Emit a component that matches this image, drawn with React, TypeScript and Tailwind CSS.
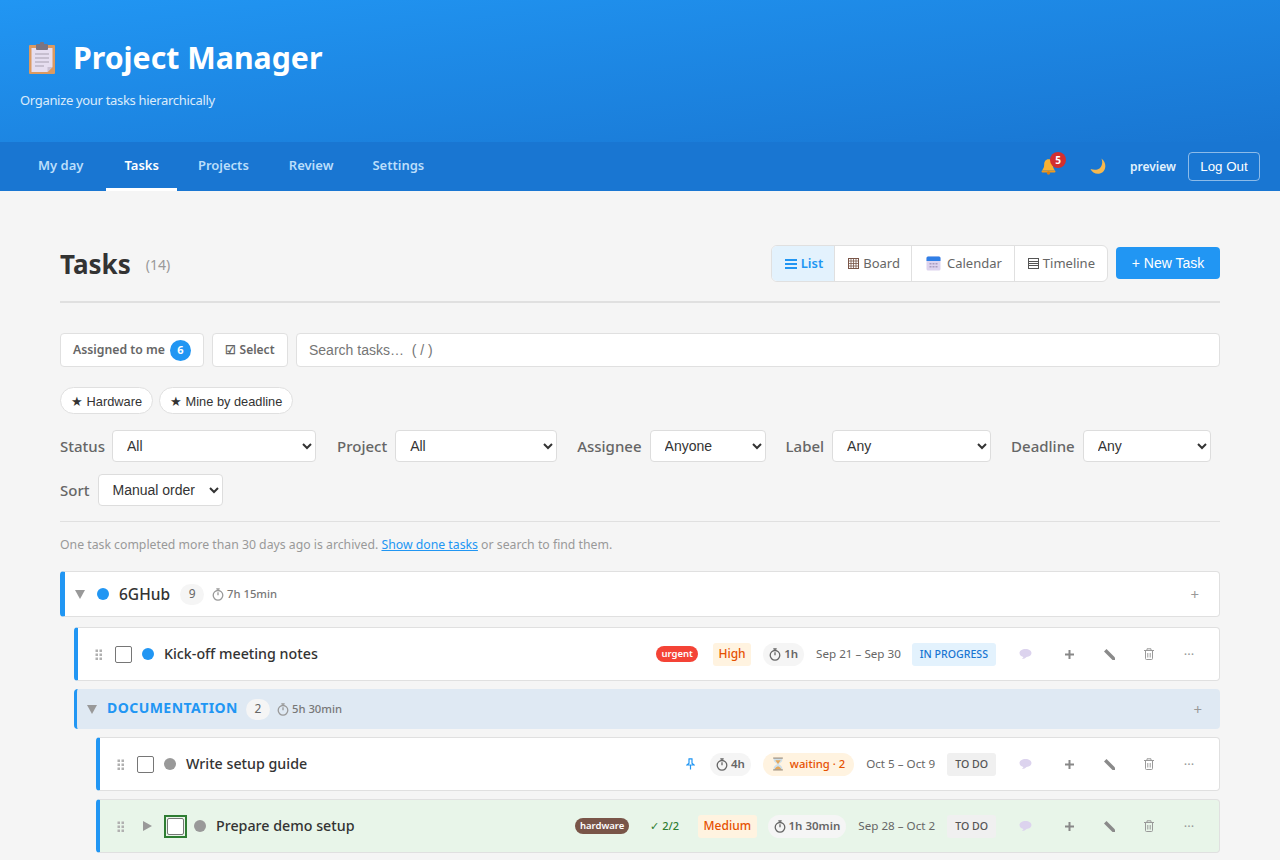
import React from "react";

const ui = "font-['Noto_Sans','Open_Sans',sans-serif]";
const arial = "font-['Liberation_Sans',Arial,sans-serif]";

function Clipboard() {
  return (
    <svg width="28" height="32" viewBox="0 0 28 32" className="shrink-0">
      <rect x="1" y="3" width="26" height="29" rx="1" fill="#dc9a60" />
      <path d="M3.500 6h21v19l-5 5h-16z" fill="#e6def0" />
      <path d="M19.500 30v-5h5z" fill="#c9bfd2" />
      <rect x="8" y="2" width="12" height="6" rx="1" fill="#7b7480" />
      <rect x="12" y="0" width="4" height="4" rx="1" fill="#7b7480" />
      <path d="M7 12h14M7 16h14M7 20h14M7 24h9" stroke="#a79fb0" strokeWidth="1.200" />
    </svg>
  );
}
function Bell() {
  return (
    <svg width="17" height="17" viewBox="0 0 17 17" className="block">
      <path d="M8.500 1.200c-3 0-4.300 2.500-4.300 5.300 0 3-1 4.500-2.200 6h13c-1.200-1.500-2.200-3-2.200-6 0-2.800-1.300-5.300-4.300-5.300z" fill="#f9b233" />
      <rect x="1.500" y="12.500" width="14" height="2" rx="1" fill="#ee9a1f" />
      <circle cx="8.500" cy="15" r="1.700" fill="#d97f12" />
    </svg>
  );
}
function Moon() {
  return (
    <svg width="17" height="17" viewBox="0 0 17 17" className="block">
      <path d="M11.500.5c1.500 4 .5 8-2 10-2.500 1.700-6 1.500-9 .5 1.500 3.500 5.500 5.500 9.500 4.500 6-1.500 7.500-10.500 1.500-15z" fill="#f6b84e" />
    </svg>
  );
}
function Cal() {
  return (
    <svg width="15" height="15" viewBox="0 0 14 15" className="block shrink-0">
      <rect x="0" y="0.500" width="14" height="14" rx="1.500" fill="#ddd3ee" />
      <path d="M0 2a1.500 1.500 0 0 1 1.500-1.500h11A1.500 1.500 0 0 1 14 2v3H0z" fill="#2f7fe6" />
      <path d="M3 7h2v1.500H3zM6 7h2v1.500H6zM9 7h2v1.500H9zM3 10h2v1.500H3zM6 10h2v1.500H6zM9 10h2v1.500H9z" fill="#a99cc0" />
    </svg>
  );
}
function Grid() {
  return (
    <svg width="11" height="11" viewBox="0 0 11 11" fill="none" stroke="#795548" strokeWidth="1" className="block shrink-0">
      <rect x="0.500" y="0.500" width="10" height="10" />
      <path d="M0 3h11M0 5.500h11M0 8h11M3 0v11M5.500 0v11M8 0v11" strokeWidth="0.800" />
    </svg>
  );
}
function Lines() {
  return (
    <svg width="11" height="11" viewBox="0 0 11 11" fill="none" stroke="#555" strokeWidth="1" className="block shrink-0">
      <rect x="0.500" y="0.500" width="10" height="10" />
      <path d="M0 3.500h11M0 5.500h11M0 7.500h11" />
    </svg>
  );
}
function Drag() {
  return (
    <svg width="8" height="11" viewBox="0 0 8 11" fill="#b0b0b0" className="block shrink-0">
      {[0.500, 4.500].map((x) => [0.500, 4.500, 8.500].map((y) => <rect key={`${x}${y}`} x={x} y={y} width="2.500" height="2.500" />))}
    </svg>
  );
}
function Bubble() {
  return (
    <svg width="13" height="12" viewBox="0 0 13 12" className="block">
      <path d="M6.500 1C3 1 .5 2.700.5 5s2 3.800 4 4L3 11c2 0 3.500-1 4.500-2 3-.2 5-1.800 5-4S10 1 6.500 1z" fill="#dcd3ee" />
    </svg>
  );
}
function Pencil() {
  return (
    <svg width="11" height="11" viewBox="0 0 11 11" className="block">
      <path d="M0 2.500 2.500 0 11 8.500V11H8.500z" fill="#8a8a8a" />
    </svg>
  );
}
function Trash() {
  return (
    <svg width="10" height="12" viewBox="0 0 10 12" fill="none" stroke="#999" strokeWidth="1" className="block">
      <path d="M1.500 3v7.500a1 1 0 0 0 1 1h5a1 1 0 0 0 1-1V3M0 2.500h10M3 2.500V.8h4v1.700M3.800 5v4.500M6.200 5v4.500" />
    </svg>
  );
}
function Plus() {
  return (
    <svg width="9" height="9" viewBox="0 0 9 9" className="block"><path d="M3.500 0h2v3.500H9v2H5.500V9h-2V5.500H0v-2h3.500z" fill="#888" /></svg>
  );
}
function Pin() {
  return (
    <svg width="9" height="12" viewBox="0 0 9 12" fill="none" stroke="#2196f3" strokeWidth="1.200" className="block">
      <path d="M2.500 .8h4M3 .8v4.500L1 7h7L6 5.300V.8M4.500 7v4.500" />
    </svg>
  );
}
function Hourglass() {
  return (
    <svg width="12" height="14" viewBox="0 0 10 13" className="block shrink-0">
      <path d="M1 1h8v1.500C9 5 6 5.500 6 6.500S9 8 9 10.500V12H1v-1.500C1 8 4 7.500 4 6.500S1 5 1 2.500z" fill="#cfe0ea" />
      <path d="M2.500 3h5L5 6.500zM1.800 11.500C2.500 9.500 4 9 5 8.500c1 .5 2.500 1 3.200 3z" fill="#e5a75a" />
      <rect x="0.500" y="0.500" width="9" height="1" fill="#9a8a78" />
      <rect x="0.500" y="11.500" width="9" height="1" fill="#9a8a78" />
    </svg>
  );
}
function Timer({ color = "#666" }: { color?: string }) {
  return (
    <svg width="12" height="13" viewBox="0 0 12 13" fill="none" stroke={color} strokeWidth="1.300" className="block shrink-0">
      <circle cx="6" cy="7.300" r="4.800" />
      <path d="M4.300 .8h3.400M6 1v1.500M6 7.300V4.300" />
    </svg>
  );
}
function Tri({ dir }: { dir: "down" | "right" }) {
  return (
    <svg width="10" height="10" viewBox="0 0 10 10" fill="#999" className="block shrink-0">
      {dir === "down" ? <path d="M0 1h10L5 10z" /> : <path d="M1 0l9 5-9 5z" />}
    </svg>
  );
}

function Actions() {
  return (
    <div className="flex items-center shrink-0 ml-[9px] mr-[10px]">
      <span className="w-10 mr-1 flex justify-center"><Bubble /></span>
      <span className="w-10 flex justify-center"><Plus /></span>
      <span className="w-10 flex justify-center"><Pencil /></span>
      <span className="w-10 flex justify-center"><Trash /></span>
      <span className="w-10 flex justify-center text-[13px] leading-none text-[#999]">···</span>
    </div>
  );
}
function Est({ children }: { children: React.ReactNode }) {
  return (
    <span className="flex items-center gap-[3px] h-[23px] px-[6px] rounded-full bg-[#f5f5f5] text-[#666] text-[11.5px] font-semibold whitespace-nowrap">
      <Timer />{children}
    </span>
  );
}
function Dates({ children }: { children: React.ReactNode }) {
  return <span className="block text-[11.65px] text-[#666] whitespace-nowrap">{children}</span>;
}
function Status({ children, blue }: { children: React.ReactNode; blue?: boolean }) {
  return (
    <span className={`flex items-center h-[23px] pt-px px-2 rounded-[3px] text-[10.6px] font-medium whitespace-nowrap ${blue ? "bg-[#e3f2fd] text-[#1976d2]" : "bg-[#f0f0f0] text-[#555]"}`}>
      {children}
    </span>
  );
}
function Dot({ c, className }: { c: string; className: string }) {
  return <span className={`block w-3 h-3 rounded-full shrink-0 ${className}`} style={{ background: c }} />;
}
function Box({ className = "" }: { className?: string }) {
  return <span className={`block w-[17px] h-[17px] rounded-[2px] border border-[#767676] bg-white shrink-0 ${className}`} />;
}

function Select({ w, children }: { w: string; children: string }) {
  return (
    <select className={`${w} h-8 ${arial} text-[14px] text-[#333] bg-white border border-[#ddd] rounded-[4px] pl-[10px]`} defaultValue={children}>
      <option>{children}</option>
    </select>
  );
}
function Filter({ label, w, value, gap = "gap-2" }: { label: string; w: string; value: string; gap?: string }) {
  return (
    <label className={`flex items-center ${gap}`}>
      <span className="text-[15px] font-medium text-[#666]">{label}</span>
      <Select w={w}>{value}</Select>
    </label>
  );
}

const tabs = [
  { t: "My day", c: "mr-[5px] text-[#bbdefb] border-transparent" },
  { t: "Tasks", c: "mr-[3px] text-white border-white" },
  { t: "Projects", c: "mr-[4px] text-[#bbdefb] border-transparent" },
  { t: "Review", c: "mr-[3px] text-[#bbdefb] border-transparent" },
  { t: "Settings", c: "text-[#bbdefb] border-transparent" },
];

export default function App() {
  return (
    <div className={`h-[860px] overflow-hidden bg-[#f5f5f5] ${ui} text-[#333]`}>
      <header className="h-[142px] bg-gradient-to-br from-[#2196f3] to-[#1976d2] pl-5 pt-[36px] text-white">
        <h1 className="flex items-center gap-[17px] pl-2 h-[44px] text-[30.25px] font-bold leading-none">
          <Clipboard />Project Manager
        </h1>
        <p className="mt-[11px] text-[13px] tracking-[-0.32px] leading-[18px] text-[#e3f2fd] opacity-95">Organize your tasks hierarchically</p>
      </header>
      <nav className="h-[49px] bg-[#1976d2] flex items-stretch pl-5 pr-5 text-[13px] font-semibold">
        {tabs.map(({ t, c }) => (
          <a key={t} className={`px-[18px] pt-[2px] flex items-center border-b-[3px] ${c}`}>{t}</a>
        ))}
        <div className="ml-auto flex items-center">
          <span className="relative mr-[33px]">
            <Bell />
            <span className="absolute -top-[6px] left-[10px] w-[16px] h-[16px] rounded-full bg-[#d32f2f] text-white text-[10px] font-bold flex items-center justify-center">5</span>
          </span>
          <span className="mr-[23px] flex"><Moon /></span>
          <span className="mr-[12px] text-[#e3f2fd] text-[12px]">preview</span>
          <button className={`h-[29px] w-[72px] rounded-[4px] border border-[#ffffff80] text-white text-[13.33px] font-normal ${arial}`}>Log Out</button>
        </div>
      </nav>
      <main className="px-[60px] pt-[54px]">
        <div className="flex items-center justify-between h-[36px] mb-[20px]">
          <div className="flex items-center gap-[15px]">
            <h2 className="text-[26px] leading-[36px] pt-[2px] font-bold text-[#333]">Tasks</h2>
            <span className="text-[14px] text-[#999] pt-[2px]">(14)</span>
          </div>
          <div className="flex items-center gap-2">
            <div className="flex h-[37px] rounded-[6px] border border-[#e0e0e0] bg-white overflow-hidden text-[13px] text-[#666]">
              <span className="flex items-center gap-[4px] pl-[13px] pr-[11px] pt-px bg-[#e3f2fd] text-[#2196f3] font-semibold border-r border-[#e0e0e0]">
                <svg width="12" height="10" viewBox="0 0 12 10" fill="#2196f3" className="block"><rect width="12" height="2" /><rect y="4" width="12" height="2" /><rect y="8" width="12" height="2" /></svg>
                List
              </span>
              <span className="flex items-center gap-[4px] pl-[13px] pr-[11px] pt-px border-r border-[#e0e0e0]"><Grid />Board</span>
              <span className="flex items-center gap-[6px] pl-[14px] pr-[12px] pt-px border-r border-[#e0e0e0]"><Cal />Calendar</span>
              <span className="flex items-center gap-[4px] pl-[13px] pr-[12px] pt-px"><Lines />Timeline</span>
            </div>
            <button className={`h-8 w-[104px] rounded-[4px] bg-[#2196f3] text-white text-[14px] ${arial}`}>+ New Task</button>
          </div>
        </div>
        <div className="h-[2px] bg-[#e0e0e0] mb-[30px]" />
        <div className="flex gap-2 h-[34px] mb-[20px]">
          <button className="flex items-center gap-[5px] w-[144px] pl-3 rounded-[4px] border border-[#e0e0e0] bg-white text-[12.25px] font-semibold text-[#666]">
            Assigned to me
            <span className="w-[21px] h-[21px] rounded-full bg-[#2196f3] text-white text-[11px] font-bold flex items-center justify-center">6</span>
          </button>
          <button className="flex items-center justify-center gap-1 w-[76px] rounded-[4px] border border-[#e0e0e0] bg-white text-[12px] font-semibold text-[#666]">☑ Select</button>
          <div className={`flex-1 flex items-center pl-3 rounded-[4px] border border-[#e0e0e0] bg-white text-[14px] text-[#757575] ${arial}`}>Search tasks…&nbsp;&nbsp;( / )</div>
        </div>
        <div className={`flex gap-[6px] h-[27px] mb-4 ${arial} text-[12.8px]`}>
          <span className="flex items-center pt-[2px] px-[10px] rounded-full border border-[#e0e0e0] bg-white">★ Hardware</span>
          <span className="flex items-center pt-[2px] px-[10px] rounded-full border border-[#e0e0e0] bg-white">★ Mine by deadline</span>
        </div>
        <div className="flex flex-wrap gap-x-5 gap-y-3 mb-[15px]">
          <span className="mr-px"><Filter label="Status" w="w-[204px]" value="All" gap="gap-[7px]" /></span>
          <Filter label="Project" w="w-[162px]" value="All" />
          <Filter label="Assignee" w="w-[116px]" value="Anyone" />
          <Filter label="Label" w="w-[159px]" value="Any" />
          <Filter label="Deadline" w="w-[128px]" value="Any" />
          <Filter label="Sort" w="w-[125px]" value="Manual order" />
        </div>
        <div className="h-px bg-[#e0e0e0] mb-[14px]" />
        <p className="text-[12.25px] leading-[18px] text-[#999] mb-[17px]">
          One task completed more than 30 days ago is archived. <a className="text-[#2196f3] underline">Show done tasks</a> or search to find them.
        </p>

        <div className="flex items-center h-[46px] rounded-[4px] border border-[#e0e0e0] border-l-[5px] border-l-[#2196f3] bg-white pl-[10px] pr-[20px] mb-[10px]">
          <Tri dir="down" />
          <Dot c="#2196f3" className="ml-[12px]" />
          <span className="ml-[10px] pt-px text-[15.5px] font-medium">6GHub</span>
          <span className="ml-[10px] w-[24px] h-[21px] rounded-full bg-[#f5f5f5] text-[#666] text-[12px] flex items-center justify-center">9</span>
          <span className="ml-[8px] flex items-center gap-[3px] text-[11.25px] font-medium text-[#777]"><Timer color="#999" />7h 15min</span>
          <span className="ml-auto text-[15px] leading-none text-[#999]">+</span>
        </div>

        <div className="ml-[14px]">
          <div className="flex items-center h-[54px] rounded-[4px] border border-[#e0e0e0] border-l-4 border-l-[#2196f3] bg-white pl-[17px] mb-2">
            <Drag />
            <Box className="ml-[12px]" />
            <Dot c="#2196f3" className="ml-[10px]" />
            <span className="ml-[10px] text-[14.25px] font-medium">Kick-off meeting notes</span>
            <div className="ml-auto flex items-center">
              <span className="h-[16px] px-[5px] rounded-full bg-[#f44336] text-white text-[9.5px] font-semibold flex items-center">urgent</span>
              <span className="ml-[15px] h-[23px] px-[5.5px] rounded-[3px] bg-[#fff3e0] text-[#e65100] text-[12px] font-medium flex items-center">High</span>
              <span className="ml-[12px]"><Est>1h</Est></span>
              <span className="ml-[12px]"><Dates>Sep 21 – Sep 30</Dates></span>
              <span className="ml-[11px]"><Status blue>IN PROGRESS</Status></span>
              <Actions />
            </div>
          </div>

          <div className="flex items-center h-[40px] rounded-[4px] border-l-[3px] border-l-[#2196f3] bg-[#dfe9f3] pl-[10px] pr-[18px] mb-2">
            <Tri dir="down" />
            <span className="ml-[10px] -mt-[3px] text-[14px] font-bold tracking-[0.45px] text-[#2196f3]">DOCUMENTATION</span>
            <span className="ml-[8px] w-[24px] h-[21px] rounded-full bg-[#f5f5f5] text-[#666] text-[12px] flex items-center justify-center">2</span>
            <span className="ml-[7px] flex items-center gap-[3px] text-[11.25px] font-medium text-[#777]"><Timer color="#999" />5h 30min</span>
            <span className="ml-auto text-[15px] leading-none text-[#999]">+</span>
          </div>

          <div className="ml-[22px]">
            <div className="flex items-center h-[54px] rounded-[4px] border border-[#e0e0e0] border-l-4 border-l-[#2196f3] bg-white pl-[17px] mb-2">
              <Drag />
              <Box className="ml-[12px]" />
              <Dot c="#999" className="ml-[10px]" />
              <span className="ml-[10px] text-[14.25px] font-medium">Write setup guide</span>
              <div className="ml-auto flex items-center">
                <Pin />
                <span className="ml-[15px]"><Est>4h</Est></span>
                <span className="ml-[12px] flex items-center gap-[6px] h-[23px] px-[9px] rounded-full bg-[#fff3e0] text-[#e65100] text-[11.25px] font-medium whitespace-nowrap"><Hourglass />waiting · 2</span>
                <span className="ml-[12px]"><Dates>Oct 5 – Oct 9</Dates></span>
                <span className="ml-[12px]"><Status>TO DO</Status></span>
                <Actions />
              </div>
            </div>

            <div className="flex items-center h-[54px] rounded-[4px] border border-[#e0e0e0] border-l-4 border-l-[#2196f3] bg-[#e8f5e9] pl-[17px]">
              <Drag />
              <span className="ml-[17px]"><Tri dir="right" /></span>
              <span className="ml-[12px] p-[1px] border-2 border-[#2e7d32] flex"><Box /></span>
              <Dot c="#999" className="ml-[7px]" />
              <span className="ml-[10px] text-[14.25px] font-medium">Prepare demo setup</span>
              <div className="ml-auto flex items-center">
                <span className="h-[16px] px-[5px] rounded-full bg-[#795548] text-white text-[9.5px] font-semibold flex items-center">hardware</span>
                <span className="ml-[21px] text-[#2e7d32] text-[11px] font-medium">✓ 2/2</span>
                <span className="ml-[19px] h-[23px] px-[5.5px] rounded-[3px] bg-[#fff3e0] text-[#e65100] text-[12px] font-medium flex items-center">Medium</span>
                <span className="ml-[11px]"><Est>1h 30min</Est></span>
                <span className="ml-[12px]"><Dates>Sep 28 – Oct 2</Dates></span>
                <span className="ml-[12px]"><Status>TO DO</Status></span>
                <Actions />
              </div>
            </div>
          </div>
        </div>
      </main>
    </div>
  );
}
